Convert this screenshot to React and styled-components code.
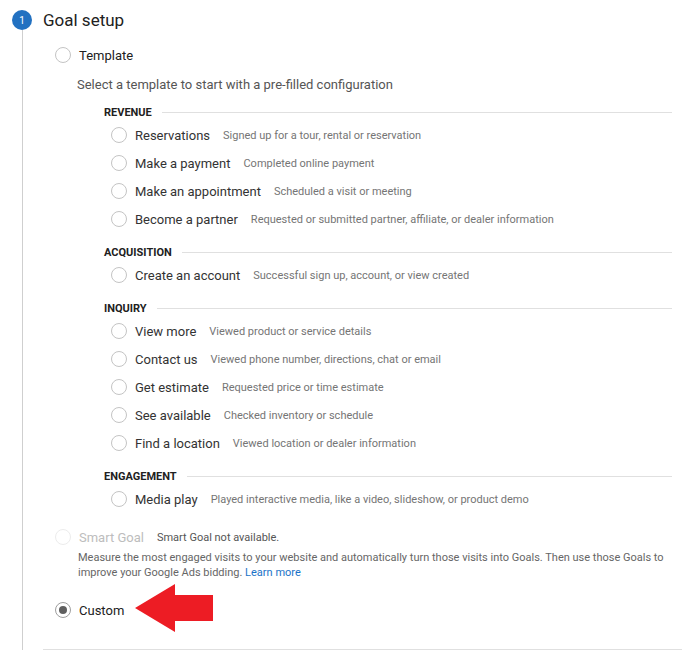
import React from 'react';
import styled, { createGlobalStyle } from 'styled-components';

const GlobalStyle = createGlobalStyle`
  body {
    margin: 0;
    background: #ffffff;
    font-family: Roboto, "Liberation Sans", Arial, sans-serif;
    color: #212121;
  }
`;

const Page = styled.div`
  display: flex;
  width: 695px;
  height: 650px;
  overflow: hidden;
  padding-right: 13px;
  box-sizing: border-box;
`;

const Rail = styled.div`
  width: 43px;
  flex-shrink: 0;
  display: flex;
  flex-direction: column;
  align-items: center;
  padding-top: 10px;
  padding-left: 1px;
  box-sizing: border-box;
`;

const StepBadge = styled.div`
  width: 20px;
  height: 20px;
  border-radius: 50%;
  background: #2271c1;
  color: #ffffff;
  font-size: 10px;
  display: flex;
  align-items: center;
  justify-content: center;
`;

const RailLine = styled.div`
  flex: 1;
  width: 1px;
  background: #cfcfcf;
`;

const Content = styled.div`
  flex: 1;
  display: flex;
  flex-direction: column;
`;

const Title = styled.h2`
  margin: 0;
  height: 40px;
  line-height: 40px;
  font-size: 17px;
  font-weight: 400;
  color: #212121;
`;

const Options = styled.div`
  flex: 1;
  padding-left: 12px;
  display: flex;
  flex-direction: column;
  border-bottom: 1px solid #e0e0e0;
`;

const OptionRow = styled.label`
  position: relative;
  display: flex;
  align-items: center;
  gap: 8px;
  height: ${p => p.$height || 24}px;
  margin-top: ${p => p.$gap || 0}px;
`;

const Radio = styled.span`
  width: 16px;
  height: 16px;
  box-sizing: border-box;
  border-radius: 50%;
  border: 1px solid ${p => (p.$disabled ? '#ececec' : p.$checked ? '#9e9e9e' : '#c4c4c4')};
  background: #ffffff;
  flex-shrink: 0;
  display: flex;
  align-items: center;
  justify-content: center;

  &::after {
    content: '';
    display: ${p => (p.$checked ? 'block' : 'none')};
    width: 8px;
    height: 8px;
    border-radius: 50%;
    background: #5f5f5f;
  }
`;

const OptionLabel = styled.span`
  font-size: 13px;
  color: ${p => (p.$disabled ? '#bdbdbd' : '#212121')};
`;

const Note = styled.span`
  font-size: 11px;
  color: #555555;
  margin-left: 5px;
`;

const Intro = styled.p`
  margin: 3px 0 0;
  padding-left: 22px;
  line-height: 24px;
  font-size: 13px;
  color: #555555;
`;

const Groups = styled.div`
  padding-left: 49px;
  margin-top: 6px;
`;

const Group = styled.div`
  & + & {
    margin-top: 10px;
  }
`;

const GroupHeader = styled.div`
  display: flex;
  align-items: center;
  gap: 10px;
  height: 18px;
  font-size: 11px;
  font-weight: 700;
  color: #212121;
  text-transform: uppercase;

  &::after {
    content: '';
    flex: 1;
    height: 1px;
    background: #e0e0e0;
    margin-right: 10px;
  }
`;

const Item = styled.label`
  display: flex;
  align-items: center;
  height: 28px;
  padding-left: 7px;
  gap: 8px;
`;

const ItemLabel = styled.span`
  font-size: 13px;
  color: #333333;
`;

const ItemDesc = styled.span`
  font-size: 11px;
  color: #757575;
  margin-left: 5px;
`;

const Help = styled.p`
  margin: 1px 0 0;
  padding-left: 23px;
  font-size: 11px;
  line-height: 15px;
  color: #666666;
`;

const HelpLink = styled.a`
  color: #1a73c8;
  text-decoration: none;
`;

const Arrow = styled.svg`
  position: absolute;
  left: 80px;
  top: -14px;
`;

const groups = [
  {
    name: 'Revenue',
    items: [
      ['Reservations', 'Signed up for a tour, rental or reservation'],
      ['Make a payment', 'Completed online payment'],
      ['Make an appointment', 'Scheduled a visit or meeting'],
      ['Become a partner', 'Requested or submitted partner, affiliate, or dealer information'],
    ],
  },
  {
    name: 'Acquisition',
    items: [['Create an account', 'Successful sign up, account, or view created']],
  },
  {
    name: 'Inquiry',
    items: [
      ['View more', 'Viewed product or service details'],
      ['Contact us', 'Viewed phone number, directions, chat or email'],
      ['Get estimate', 'Requested price or time estimate'],
      ['See available', 'Checked inventory or schedule'],
      ['Find a location', 'Viewed location or dealer information'],
    ],
  },
  {
    name: 'Engagement',
    items: [['Media play', 'Played interactive media, like a video, slideshow, or product demo']],
  },
];

export default function App() {
  return (
    <>
      <GlobalStyle />
      <Page>
        <Rail>
          <StepBadge>1</StepBadge>
          <RailLine />
        </Rail>
        <Content>
          <Title>Goal setup</Title>
          <Options>
            <OptionRow $height={30}>
              <Radio />
              <OptionLabel>Template</OptionLabel>
            </OptionRow>
            <Intro>Select a template to start with a pre-filled configuration</Intro>
            <Groups>
              {groups.map(g => (
                <Group key={g.name}>
                  <GroupHeader>{g.name}</GroupHeader>
                  {g.items.map(([label, desc]) => (
                    <Item key={label}>
                      <Radio />
                      <ItemLabel>{label}</ItemLabel>
                      <ItemDesc>{desc}</ItemDesc>
                    </Item>
                  ))}
                </Group>
              ))}
            </Groups>
            <OptionRow $gap={12}>
              <Radio $disabled />
              <OptionLabel $disabled>Smart Goal</OptionLabel>
              <Note>Smart Goal not available.</Note>
            </OptionRow>
            <Help>
              Measure the most engaged visits to your website and automatically turn those visits into Goals. Then use those Goals to improve your Google Ads bidding. <HelpLink href="#">Learn more</HelpLink>
            </Help>
            <OptionRow $gap={18}>
              <Radio $checked />
              <OptionLabel>Custom</OptionLabel>
              <Arrow width="78" height="48" viewBox="0 0 78 48">
                <polygon points="0,24 40,0 40,11 78,11 78,37 40,37 40,48" fill="#ed1c24" />
              </Arrow>
            </OptionRow>
          </Options>
        </Content>
      </Page>
    </>
  );
}
